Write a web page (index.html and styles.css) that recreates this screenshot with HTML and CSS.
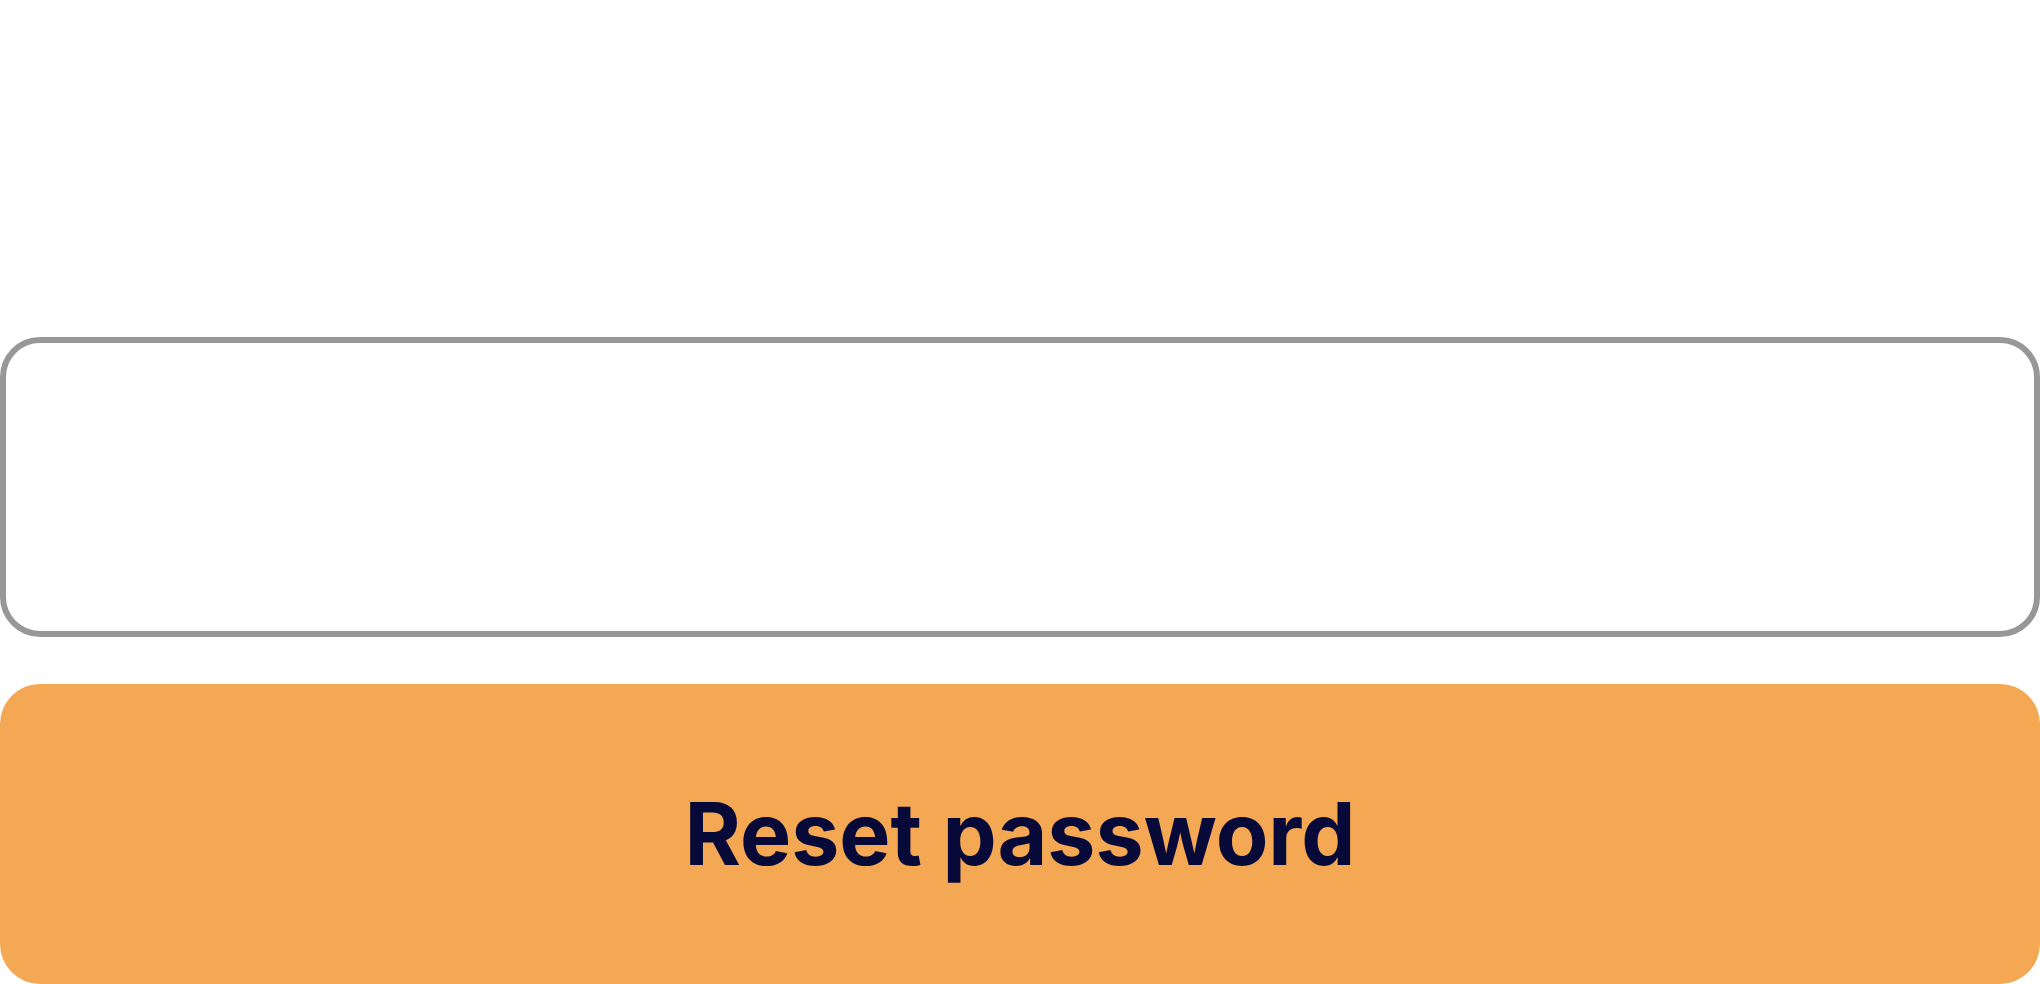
FILE: index.html
```html
<!DOCTYPE html>
<html lang="en">
<head>
<meta charset="utf-8">
<title>Reset password</title>
<link rel="stylesheet" href="styles.css">
</head>
<body>
<main class="form">
  <div class="field">
    <input class="input" type="email" aria-label="Email">
  </div>
  <button class="btn" type="submit"><span class="btn-label">Reset password</span></button>
</main>
</body>
</html>
```
FILE: styles.css
```css
html, body {
  margin: 0;
  padding: 0;
  background: #ffffff;
  width: 2040px;
  height: 984px;
  overflow: hidden;
}
.form {
  display: flex;
  flex-direction: column;
  padding-top: 337px;
  gap: 47px;
}
.field {
  display: flex;
}
.input {
  flex: 1;
  box-sizing: border-box;
  height: 300px;
  margin: 0;
  border: 6px solid #979797;
  border-radius: 40px;
  background: #ffffff;
  outline: none;
}
.btn {
  box-sizing: border-box;
  width: 100%;
  height: 300px;
  margin: 0;
  padding: 0;
  border: 0;
  border-radius: 40px;
  background: #f5a853;
  color: #070a38;
  font-family: Inter, "Liberation Sans", sans-serif;
  font-weight: 700;
  font-size: 86px;
  display: flex;
  align-items: center;
  justify-content: center;
}
```
